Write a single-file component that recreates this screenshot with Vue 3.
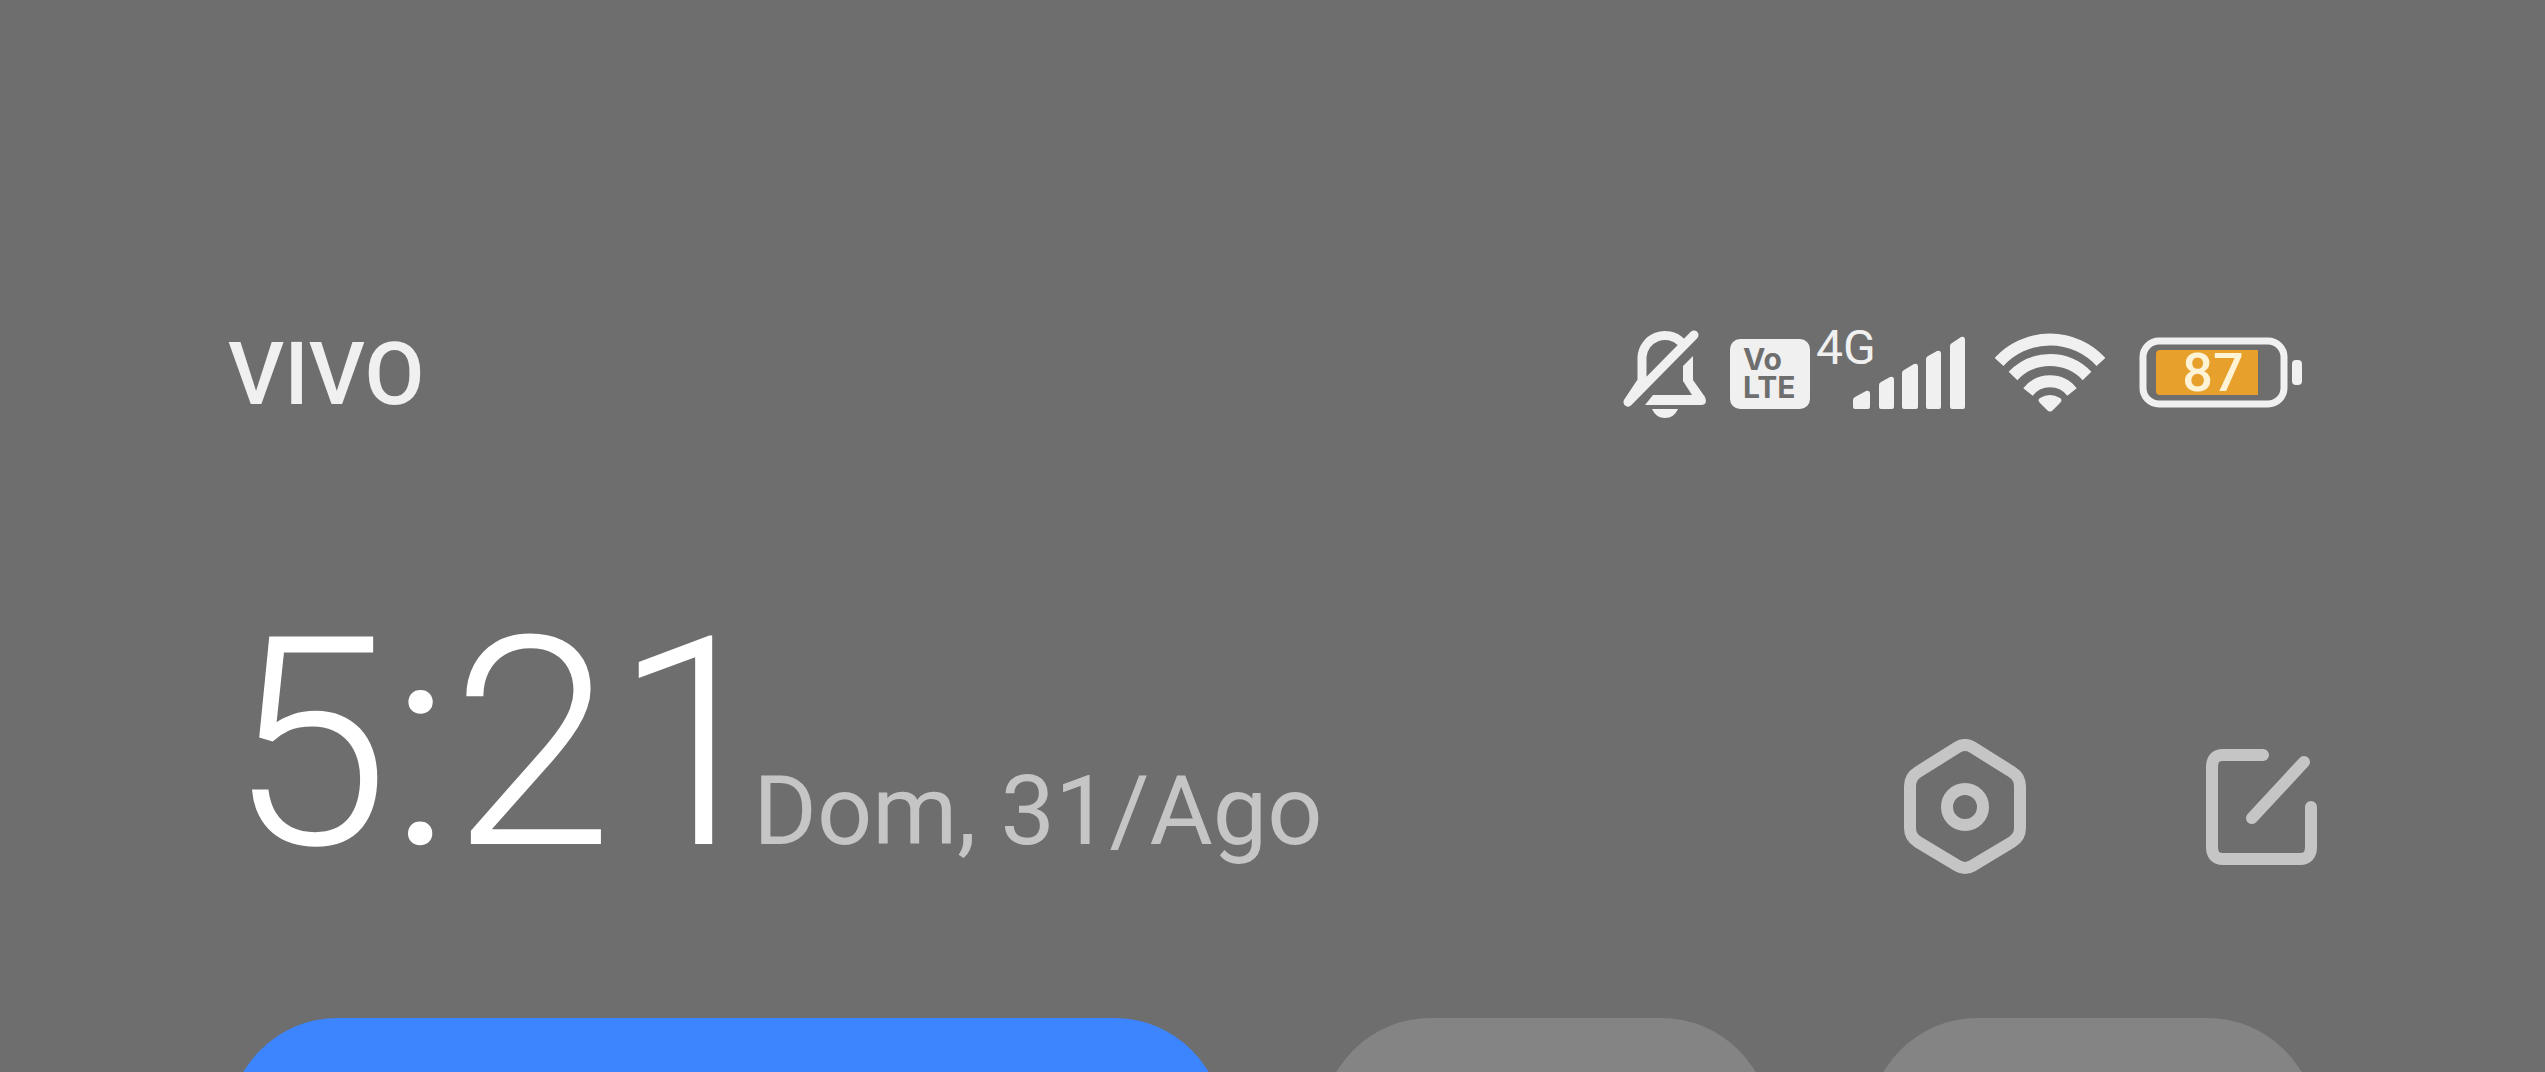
<script setup>
const bars = [
  'M37 70 Q37 68 39 67 L50 61 Q54 60 54 64 V77 Q54 79 52 79 H39 Q37 79 37 77 Z',
  'M63 55 Q63 53 65 52 L74 47 Q78 46 78 50 V77 Q78 79 76 79 H65 Q63 79 63 77 Z',
  'M86 43 Q86 41 88 40 L98 34 Q102 33 102 37 V77 Q102 79 100 79 H88 Q86 79 86 77 Z',
  'M110 29 Q110 27 112 26 L121 21 Q125 20 125 24 V77 Q125 79 123 79 H112 Q110 79 110 77 Z',
  'M134 16 Q134 14 136 13 L145 7 Q149 6 149 10 V77 Q149 79 147 79 H136 Q134 79 134 77 Z'
]
const tiles = [
  { id: 1, active: true },
  { id: 2, active: false },
  { id: 3, active: false }
]
</script>

<template>
  <main class="panel">
    <header class="status">
      <span class="carrier">VIVO</span>
      <div class="indicators">
        <svg class="bell" width="84" height="88" viewBox="0 0 84 88" aria-hidden="true">
          <path d="M59 12 A23 23 0 0 0 20 27 V51 L6 72 L72 5" fill="none" stroke="currentColor" stroke-width="9" stroke-linecap="round" stroke-linejoin="round" />
          <path d="M71 26 V50 L83 67 Q86 75 79 75 H23 L31 65 H70 L61 51 V36 Z" fill="currentColor" />
          <path d="M30 79 H56 Q52 88 43 88 Q34 88 30 79 Z" fill="currentColor" />
        </svg>
        <div class="volte">Vo<br>LTE</div>
        <div class="cell">
          <span class="network">4G</span>
          <svg width="150" height="88" viewBox="0 0 150 88" aria-hidden="true">
            <path v-for="bar in bars" :key="bar" :d="bar" fill="currentColor" />
          </svg>
        </div>
        <svg class="wifi" width="110" height="88" viewBox="0 0 110 88" aria-hidden="true">
          <g fill="none" stroke="currentColor" stroke-width="12">
            <path d="M4 32 A69 69 0 0 1 106 32" />
            <path d="M18 46 A51 51 0 0 1 92 46" />
            <path d="M33 62 A28 28 0 0 1 77 62" />
          </g>
          <path d="M45 73 Q42 70 45 68 Q55 62 65 68 Q68 70 65 73 L58 80 Q55 83 52 80 Z" fill="currentColor" />
        </svg>
        <div class="battery">
          <svg width="164" height="88" viewBox="0 0 164 88" aria-hidden="true">
            <rect x="4" y="11" width="141" height="63" rx="16" fill="none" stroke="currentColor" stroke-width="7" />
            <path d="M119 20 V65 H21 Q17 65 17 61 V24 Q17 20 21 20 Z" fill="#e6a02b" />
            <rect x="153" y="30" width="10" height="25" rx="4" fill="currentColor" />
          </svg>
          <span class="level">87</span>
        </div>
      </div>
    </header>

    <section class="heading">
      <div class="when">
        <time class="clock">5:21</time>
        <span class="date">Dom, 31/Ago</span>
      </div>
      <div class="actions">
        <button type="button" aria-label="Configurações">
          <svg width="122" height="136" viewBox="0 0 122 136" fill="none" stroke="currentColor" stroke-width="12">
            <path d="M54 8 Q61 4 68 8 L108 33 Q116 38 116 47 V89 Q116 98 108 103 L68 127 Q61 131 54 127 L14 103 Q6 98 6 89 V47 Q6 38 14 33 Z" />
            <circle cx="61" cy="68" r="18" />
          </svg>
        </button>
        <button type="button" aria-label="Editar">
          <svg width="111" height="136" viewBox="0 0 111 136" fill="none" stroke="currentColor" stroke-width="12" stroke-linecap="round">
            <path d="M57 16 H17 Q6 16 6 28 V108 Q6 120 17 120 H94 Q105 120 105 108 V68" />
            <path d="M98 23 L46 79" />
          </svg>
        </button>
      </div>
    </section>

    <section class="tiles">
      <div v-for="tile in tiles" :key="tile.id" class="tile" :class="{ active: tile.active }"></div>
    </section>
  </main>
</template>

<style>
body {
  background: #6e6e6e;
}
</style>

<style scoped>
.panel {
  box-sizing: border-box;
  display: flex;
  flex-direction: column;
  height: 100vh;
  padding: 330px 228px 0;
  overflow: hidden;
  background: #6e6e6e;
  color: #f0f0f0;
  font-family: Roboto, "Liberation Sans", sans-serif;
}
svg {
  display: block;
}
.status {
  display: flex;
  flex: none;
  align-items: center;
  justify-content: space-between;
  padding-right: 14px;
}
.carrier {
  font-size: 87px;
  font-weight: 500;
  line-height: 88px;
}
.indicators {
  display: flex;
  align-items: center;
}
.volte {
  box-sizing: border-box;
  width: 80px;
  height: 70px;
  margin-left: 24px;
  padding: 6px 0 0 13px;
  border-radius: 10px;
  background: #f0f0f0;
  color: #6e6e6e;
  font-family: Inter, sans-serif;
  font-size: 30px;
  font-weight: 700;
  line-height: 28px;
}
.cell {
  position: relative;
  margin-left: 6px;
}
.network {
  position: absolute;
  top: -6px;
  left: 0;
  font-size: 48px;
  line-height: 48px;
}
.wifi {
  margin-left: 29px;
}
.battery {
  position: relative;
  margin-left: 34px;
}
.level {
  position: absolute;
  top: 15px;
  left: 0;
  width: 148px;
  color: #fff3d6;
  font-size: 54px;
  font-weight: 500;
  line-height: 56px;
  text-align: center;
}
.heading {
  display: flex;
  flex: none;
  align-items: flex-end;
  justify-content: space-between;
  margin-top: 206px;
}
.when {
  display: flex;
  align-items: baseline;
  padding-bottom: 11px;
}
.clock {
  color: #fff;
  font-size: 292px;
  font-weight: 300;
  line-height: 240px;
}
.date {
  margin-left: -22px;
  color: #c5c5c5;
  font-size: 97px;
  line-height: 98px;
}
.actions {
  display: flex;
  gap: 180px;
}
.actions button {
  padding: 0;
  border: 0;
  background: none;
  color: #c5c5c5;
}
.tiles {
  display: grid;
  flex: none;
  grid-template-columns: repeat(4, 1fr);
  gap: 97px;
  margin-top: 143px;
}
.tile {
  height: 450px;
  border-radius: 110px;
  background: #848484;
}
.tile.active {
  grid-column: span 2;
  background: #3d85ff;
}
</style>
